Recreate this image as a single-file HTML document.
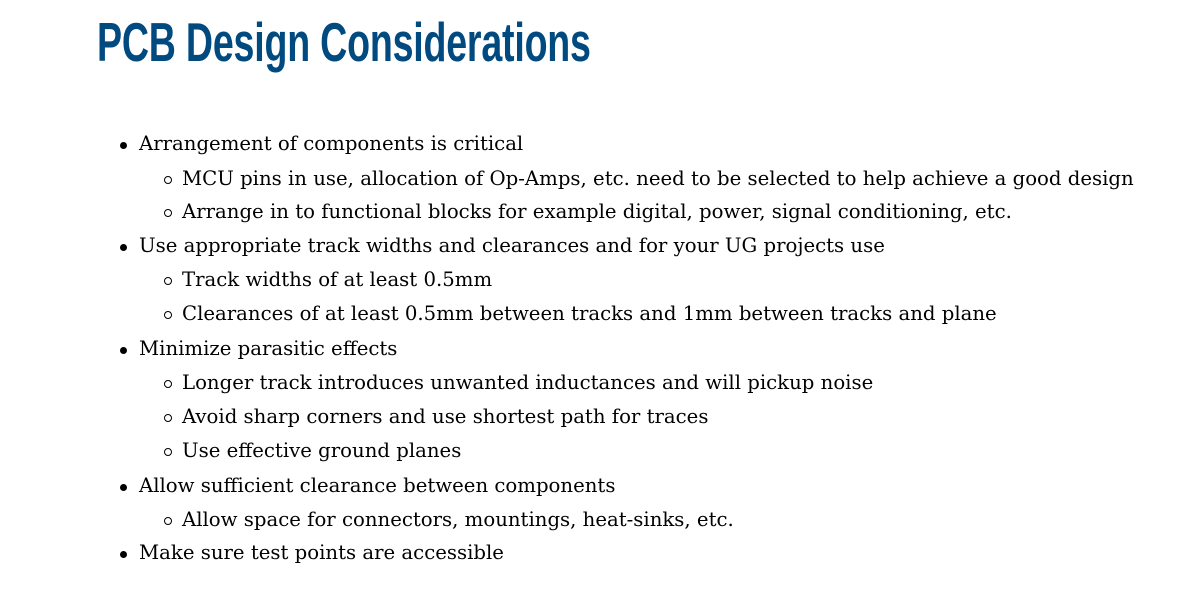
<!DOCTYPE html>
<html><head><meta charset="utf-8"><style>
body{margin:0;background:#fff;width:1180px;height:599px;overflow:hidden}
h1{position:absolute;left:97px;top:10px;margin:0;font-family:"Liberation Sans Narrow","Liberation Sans",sans-serif;font-weight:bold;font-size:55px;color:#004a80;transform-origin:0 0;transform:scaleX(0.683);white-space:nowrap;letter-spacing:-0.3px}
.l{position:absolute;font-family:"DejaVu Serif","Liberation Serif",serif;font-size:19.7px;color:#000;white-space:nowrap;line-height:24px}
.l.a{left:139px}.l.b{left:182px}
.l.a:before{content:"";position:absolute;left:-19px;top:10px;width:7px;height:7px;border-radius:50%;background:#000}
.l.b:before{content:"";position:absolute;left:-18px;top:9px;width:6px;height:6px;border-radius:50%;border:1.3px solid #000}
</style></head><body>
<h1>PCB Design Considerations</h1>
<div class="l a" style="top:132px">Arrangement of components is critical</div>
<div class="l b" style="top:167px">MCU pins in use, allocation of Op-Amps, etc. need to be selected to help achieve a good design</div>
<div class="l b" style="top:200px">Arrange in to functional blocks for example digital, power, signal conditioning, etc.</div>
<div class="l a" style="top:234px">Use appropriate track widths and clearances and for your UG projects use</div>
<div class="l b" style="top:268px">Track widths of at least 0.5mm</div>
<div class="l b" style="top:302px">Clearances of at least 0.5mm between tracks and 1mm between tracks and plane</div>
<div class="l a" style="top:337px">Minimize parasitic effects</div>
<div class="l b" style="top:371px">Longer track introduces unwanted inductances and will pickup noise</div>
<div class="l b" style="top:405px">Avoid sharp corners and use shortest path for traces</div>
<div class="l b" style="top:439px">Use effective ground planes</div>
<div class="l a" style="top:474px">Allow sufficient clearance between components</div>
<div class="l b" style="top:508px">Allow space for connectors, mountings, heat-sinks, etc.</div>
<div class="l a" style="top:541px">Make sure test points are accessible</div>
</body></html>
